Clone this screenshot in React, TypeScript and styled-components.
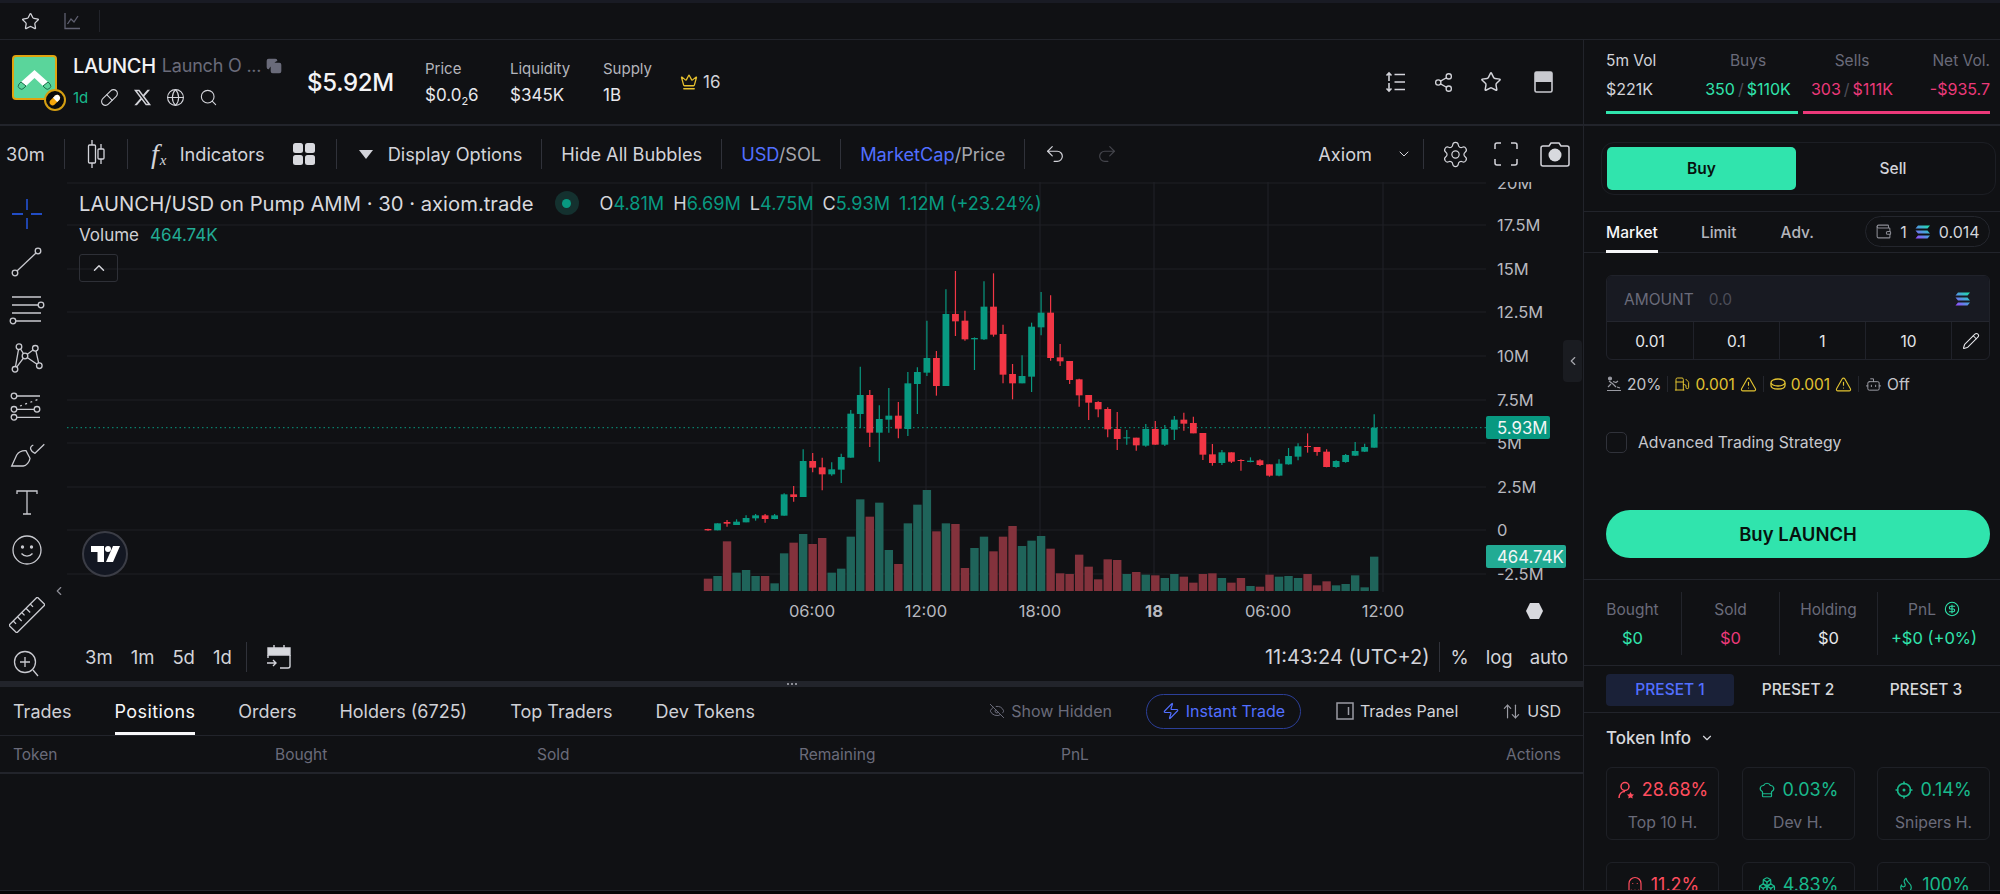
import React from 'react';
import styled, { createGlobalStyle } from 'styled-components';
import {
  Star,
  Pill,
  Search,
  Globe,
  Crown,
  Share2,
  ChevronDown,
  ChevronLeft,
  ChevronUp,
  Undo2,
  Redo2,
  Settings,
  EyeOff,
  Zap,
  ArrowUpDown,
  Wallet,
  Pencil,
  Fuel,
  Bot,
  TriangleAlert,
  CircleDollarSign,
  ChefHat,
  Ghost,
  Boxes,
  Flame,
  Copy,
} from 'lucide-react';
import { FaXTwitter } from 'react-icons/fa6';

const GlobalStyle = createGlobalStyle`
  html, body {
    margin: 0;
    padding: 0;
    background: #101114;
    overflow: hidden;
  }
  * {
    box-sizing: border-box;
  }
`;

const C = {
  bg: '#101114',
  line: '#22242b',
  text: '#d3d4da',
  muted: '#6a6b7a',
  green: '#30e4ad',
  pink: '#ec397a',
  tvGreen: '#089981',
  tvRed: '#f23645',
  blue: '#526fff',
};

const Page = styled.div`
  width: 2000px;
  height: 894px;
  display: flex;
  flex-direction: column;
  background: ${C.bg};
  color: ${C.text};
  font-family: Inter, 'Liberation Sans', sans-serif;
  overflow: hidden;
  border-top: 3px solid #191b24;
`;

const TopBar = styled.div`
  height: 37px;
  flex: none;
  display: flex;
  align-items: center;
  padding-left: 21px;
  border-bottom: 1px solid ${C.line};
`;

const TopIcon = styled.span`
  display: flex;
  color: ${(p: { $color?: string }) => p.$color || C.text};
  margin-right: 24px;
`;

const TopSep = styled.div`
  width: 1px;
  height: 22px;
  background: ${C.line};
  margin-left: -5px;
`;

const Body = styled.div`
  flex: 1;
  min-height: 0;
  display: flex;
`;

const Main = styled.div`
  width: 1584px;
  flex: none;
  display: flex;
  flex-direction: column;
  border-right: 1px solid ${C.line};
`;

/* token header */
const TokenHeader = styled.div`
  height: 86px;
  flex: none;
  display: flex;
  align-items: center;
  padding: 0 29px 0 12px;
  border-bottom: 2px solid ${C.line};
`;

const LogoWrap = styled.div`
  position: relative;
  width: 45px;
  height: 45px;
  flex: none;
  margin-bottom: 9px;
`;

const LogoBadge = styled.div`
  position: absolute;
  right: -9px;
  bottom: -11px;
  width: 22px;
  height: 22px;
  border-radius: 50%;
  background: #0b0b0d;
  border: 2px solid #d59f12;
  display: flex;
  align-items: center;
  justify-content: center;
`;

const TokenNames = styled.div`
  margin-left: 16px;
  width: 234px;
  display: flex;
  flex-direction: column;
  gap: 9px;
  margin-bottom: 2px;
`;

const NameRow = styled.div`
  display: flex;
  align-items: center;
  height: 24px;
`;

const Ticker = styled.span`
  font-size: 20px;
  font-weight: 500;
  color: #f2f2f4;
  letter-spacing: -0.3px;
`;

const FullName = styled.span`
  margin-left: 6px;
  font-size: 18px;
  color: ${C.muted};
  letter-spacing: -0.2px;
`;

const LinkRow = styled.div`
  display: flex;
  align-items: center;
  gap: 14px;
  height: 22px;
  color: ${C.text};
`;

const AgeText = styled.span`
  color: #19b98c;
  font-size: 15px;
  margin-right: -2px;
`;

const MarketCap = styled.div`
  width: 118px;
  font-size: 24px;
  font-weight: 500;
  color: #f4f4f6;
  letter-spacing: -0.3px;
`;

const HeadStat = styled.div`
  width: ${(p: { $w: number }) => p.$w}px;
  display: flex;
  flex-direction: column;
  gap: 7px;
`;

const HeadLabel = styled.span`
  font-size: 15px;
  color: #b4b5bc;
`;

const HeadValue = styled.span`
  font-size: 17px;
  color: #e8e8ec;
  sub {
    font-size: 11px;
    line-height: 0;
  }
`;

const CrownCount = styled.div`
  display: flex;
  align-items: center;
  gap: 5px;
  font-size: 17px;
  color: ${C.text};
`;

const HeadActions = styled.div`
  margin-left: auto;
  display: flex;
  align-items: center;
  gap: 26px;
  color: ${C.text};
`;

/* chart toolbar */
const ChartToolbar = styled.div`
  height: 56px;
  flex: none;
  display: flex;
  align-items: center;
  gap: 19px;
  padding: 0 13px 0 6px;
  font-size: 18.2px;
  color: ${C.text};
  white-space: nowrap;
`;

const ToolSep = styled.div`
  width: 1px;
  height: 30px;
  flex: none;
  background: #30323a;
  margin-left: ${(p: { $ml?: number }) => p.$ml || 0}px;
`;

const ToolItem = styled.div<{ $gap?: number; $ml?: number; $auto?: boolean }>`
  display: flex;
  align-items: center;
  flex: none;
  gap: ${(p) => p.$gap || 0}px;
  margin-left: ${(p) => (p.$auto ? 'auto' : `${p.$ml || 0}px`)};
`;

const FxGlyph = styled.span`
  display: flex;
  width: 24px;
  justify-content: center;
  font-family: 'Liberation Serif', serif;
  font-style: italic;
  font-size: 28px;
  line-height: 28px;
  i {
    font-size: 15px;
    line-height: 15px;
    align-self: flex-end;
    margin-left: 1px;
  }
`;

const Down = styled.span`
  width: 0;
  height: 0;
  border-left: 7.5px solid transparent;
  border-right: 7.5px solid transparent;
  border-top: 9px solid #d3d4da;
`;

const Accent = styled.span`
  color: ${C.blue};
`;

const Dim = styled.span`
  color: #a6a7ae;
`;

/* chart area */
const ChartArea = styled.div`
  height: 499px;
  flex: none;
  display: flex;
`;

const ToolColumn = styled.div`
  position: relative;
  width: 67px;
  flex: none;
  display: flex;
  flex-direction: column;
  padding: 14px 0 0 9px;
  gap: 12px;
`;

const ToolSvg = styled.svg`
  display: block;
  width: 36px;
  height: 36px;
  flex: none;
  fill: none;
  stroke: #c9cad0;
  stroke-width: 1.3;
  circle.node {
    fill: ${C.bg};
  }
`;

const ColumnRule = styled.div`
  width: 48px;
  height: 1px;
  margin: 3px 0 2px -6px;
  background: #3a3c44;
`;

const ColumnCollapse = styled.span`
  position: absolute;
  left: 52px;
  top: 402px;
  display: flex;
  color: #8b8c94;
`;

const ChartBody = styled.div`
  position: relative;
  flex: 1;
  min-width: 0;
  display: flex;
  flex-direction: column;
`;

const ChartSvg = styled.svg`
  display: block;
  width: 1516px;
  height: 443px;
  flex: none;
`;

const AxisText = styled.text`
  font-family: Inter, 'Liberation Sans', sans-serif;
  font-size: 16.5px;
  fill: #b7b8bf;
`;

const TagText = styled.text`
  font-family: Inter, 'Liberation Sans', sans-serif;
  font-size: 16.8px;
  fill: #f4f6f6;
`;

const Legend = styled.div`
  position: absolute;
  left: 12px;
  top: 9px;
  display: flex;
  align-items: center;
  height: 24px;
  font-size: 20.25px;
  color: #d8d9de;
  white-space: nowrap;
`;

const LegendDot = styled.span`
  width: 24px;
  height: 24px;
  margin: 0 21px 0 21px;
  border-radius: 50%;
  background: #14312f;
  display: flex;
  align-items: center;
  justify-content: center;
  &::after {
    content: '';
    width: 9px;
    height: 9px;
    border-radius: 50%;
    background: ${C.tvGreen};
  }
`;

const Ohlc = styled.span`
  display: flex;
  gap: 9px;
  font-size: 18.1px;
  b {
    font-weight: 400;
    color: ${C.text};
  }
  em {
    font-style: normal;
    color: ${C.tvGreen};
  }
`;

const VolumeLine = styled.div`
  position: absolute;
  left: 12px;
  top: 43px;
  display: flex;
  gap: 11px;
  font-size: 17px;
  color: #cfd0d5;
  em {
    font-style: normal;
    color: #22ab94;
  }
`;

const CollapseLegend = styled.div`
  position: absolute;
  left: 12px;
  top: 72px;
  width: 39px;
  height: 28px;
  border: 1px solid #2e3037;
  border-radius: 3px;
  display: flex;
  align-items: center;
  justify-content: center;
  color: #d3d4da;
`;

const TvBadge = styled.div`
  position: absolute;
  left: 15px;
  top: 349px;
  width: 46px;
  height: 46px;
  border-radius: 50%;
  background: #131722;
  border: 2px solid #3b3d46;
  display: flex;
  align-items: center;
  justify-content: center;
`;

const SideHandle = styled.div`
  position: absolute;
  right: 1px;
  top: 158px;
  width: 19px;
  height: 42px;
  border-radius: 4px;
  background: #1a1c21;
  display: flex;
  align-items: center;
  justify-content: center;
  color: #a6a7ae;
`;

const RangeBar = styled.div`
  flex: 1;
  display: flex;
  align-items: center;
  padding: 8px 15px 0 18px;
  font-size: 18.5px;
  color: ${C.text};
`;

const RangeBtn = styled.span`
  margin-right: ${(p: { $mr: number }) => p.$mr}px;
`;

const RangeSep = styled.div`
  width: 1px;
  height: 30px;
  background: #30323a;
  margin: ${(p: { $tight?: boolean }) => (p.$tight ? '0 -6px' : '0')};
`;

const RangeRight = styled.div`
  margin-left: auto;
  display: flex;
  align-items: center;
  gap: 17px;
`;

const ClockText = styled.span`
  font-size: 20px;
  margin-right: -2px;
`;

const Grip = styled.div`
  height: 6px;
  flex: none;
  background: #22242b;
  display: flex;
  align-items: center;
  justify-content: center;
  gap: 2px;
  span {
    width: 2px;
    height: 2px;
    background: #8b8c94;
  }
`;

/* bottom panel */
const TabsBar = styled.div`
  height: 49px;
  flex: none;
  display: flex;
  align-items: stretch;
  padding: 0 22px 0 13px;
  border-bottom: 1px solid ${C.line};
`;

const BottomTab = styled.div<{ $active?: boolean }>`
  display: flex;
  align-items: center;
  margin-right: 43px;
  font-size: 18px;
  letter-spacing: ${(p) => (p.$active ? '0.4px' : '0')};
  color: ${(p) => (p.$active ? '#f7f7f9' : '#cfd0d6')};
  border-bottom: 3px solid ${(p) => (p.$active ? '#f7f7f9' : 'transparent')};
  border-top: 3px solid transparent;
`;

const TabActions = styled.div`
  margin-left: auto;
  display: flex;
  align-items: center;
  font-size: 16px;
`;

const TabAction = styled.div<{ $color?: string; $mr?: number }>`
  display: flex;
  align-items: center;
  gap: 6px;
  color: ${(p) => p.$color || C.text};
  margin-right: ${(p) => p.$mr || 0}px;
`;

const InstantPill = styled.div`
  display: flex;
  align-items: center;
  justify-content: center;
  gap: 6px;
  width: 155px;
  height: 35px;
  margin-right: 35px;
  border: 1px solid #2c3f98;
  border-radius: 18px;
  color: ${C.blue};
`;

const TableHead = styled.div`
  height: 38px;
  flex: none;
  display: grid;
  grid-template-columns: repeat(4, 262px) 1fr 170px;
  align-items: center;
  padding: 0 22px 0 13px;
  font-size: 15.5px;
  color: ${C.muted};
  border-bottom: 2px solid ${C.line};
`;

const HeadCell = styled.span<{ $right?: boolean }>`
  text-align: ${(p) => (p.$right ? 'right' : 'left')};
`;

const Footer = styled.div`
  height: 4px;
  flex: none;
  background: #050506;
  border-top: 1px solid ${C.line};
`;

/* right panel */
const Side = styled.div`
  flex: 1;
  min-width: 0;
  display: flex;
  flex-direction: column;
  overflow: hidden;
`;

const Volumes = styled.div`
  height: 86px;
  flex: none;
  padding: 11px 10px 0 22px;
  border-bottom: 2px solid ${C.line};
`;

const VolumeGrid = styled.div`
  display: grid;
  grid-template-columns: 97px 90px 118px 1fr;
  row-gap: 9px;
  font-size: 16px;
  white-space: nowrap;
`;

const VolCell = styled.span<{ $align?: string; $color?: string }>`
  text-align: ${(p) => p.$align || 'center'};
  color: ${(p) => p.$color || C.text};
  i {
    font-style: normal;
    color: #4d4e59;
    margin: 0 3px;
  }
`;

const VolLabel = styled(VolCell)`
  font-size: 15.5px;
  color: ${(p) => p.$color || C.muted};
`;

const VolBars = styled.div`
  display: flex;
  gap: 5px;
  margin-top: 12px;
`;

const VolBar = styled.div<{ $color: string }>`
  height: 3px;
  background: ${(p) => p.$color};
`;

const SwitchWrap = styled.div`
  height: 86px;
  flex: none;
  padding: 16px 4px 16px 17px;
  border-bottom: 1px solid ${C.line};
`;

const Switch = styled.div`
  height: 53px;
  border: 1px solid #1c1e24;
  border-radius: 13px;
  padding: 4px 5px;
  display: flex;
`;

const SwitchBtn = styled.div<{ $on?: boolean }>`
  width: 189px;
  flex: ${(p) => (p.$on ? 'none' : 1)};
  display: flex;
  align-items: center;
  justify-content: center;
  border-radius: 5px;
  font-size: 15.5px;
  font-weight: ${(p) => (p.$on ? 600 : 500)};
  background: ${(p) => (p.$on ? C.green : 'transparent')};
  color: ${(p) => (p.$on ? '#07120e' : C.text)};
`;

const OrderTabs = styled.div`
  height: 41px;
  flex: none;
  display: flex;
  align-items: stretch;
  padding: 0 10px 0 22px;
  border-bottom: 1px solid ${C.line};
  font-size: 15.5px;
`;

const OrderTab = styled.div<{ $active?: boolean; $mr: number }>`
  display: flex;
  align-items: center;
  margin-right: ${(p) => p.$mr}px;
  font-weight: 500;
  color: ${(p) => (p.$active ? '#f7f7f9' : '#b4b5bc')};
  border-bottom: 3px solid ${(p) => (p.$active ? '#f7f7f9' : 'transparent')};
  border-top: 3px solid transparent;
  margin-bottom: -1px;
`;

const WalletPill = styled.div`
  margin: 4px 0 5px auto;
  width: 125px;
  display: flex;
  align-items: center;
  justify-content: center;
  gap: 8px;
  border: 1px solid #24262d;
  border-radius: 16px;
  font-size: 16px;
  color: ${C.text};
  svg {
    flex: none;
  }
`;

const OrderForm = styled.div`
  height: 327px;
  flex: none;
  padding: 22px 10px 0 22px;
  border-bottom: 1px solid ${C.line};
`;

const AmountBox = styled.div`
  height: 85px;
  border: 1px solid #20222a;
  border-radius: 6px;
  overflow: hidden;
`;

const AmountInput = styled.div`
  height: 46px;
  display: flex;
  align-items: center;
  padding: 1px 18px 0 17px;
  background: #181a22;
  border-bottom: 1px solid #24262e;
  font-size: 15.5px;
  color: ${C.muted};
`;

const AmountZero = styled.span`
  margin-left: 15px;
  color: #4c4d58;
`;

const SolWrap = styled.span`
  margin-left: auto;
  display: flex;
`;

const QuickRow = styled.div`
  height: 38px;
  display: grid;
  grid-template-columns: repeat(4, 86px) 1fr;
`;

const QuickCell = styled.div`
  display: flex;
  align-items: center;
  justify-content: center;
  font-size: 15.5px;
  color: #e6e7ea;
  border-left: 1px solid #20222a;
  &:first-child {
    border-left: 0;
  }
`;

const InfoRow = styled.div`
  margin-top: 14px;
  height: 20px;
  display: flex;
  align-items: center;
  gap: 6px;
  font-size: 15.5px;
  color: #c4c5cb;
`;

const InfoItem = styled.span<{ $warn?: boolean }>`
  display: flex;
  align-items: center;
  gap: 5px;
  color: ${(p) => (p.$warn ? '#e2c331' : '#c4c5cb')};
`;

const InfoSep = styled.span`
  width: 1px;
  height: 16px;
  background: #24262d;
`;

const CheckRow = styled.div`
  margin-top: 38px;
  display: flex;
  align-items: center;
  gap: 11px;
  height: 20px;
  font-size: 15.75px;
  color: #c7c8ce;
`;

const CheckBox = styled.div`
  width: 21px;
  height: 21px;
  border: 1px solid #30323a;
  border-radius: 5px;
`;

const BuyButton = styled.div`
  margin-top: 58px;
  height: 48px;
  border-radius: 24px;
  background: ${C.green};
  color: #07120e;
  display: flex;
  align-items: center;
  justify-content: center;
  font-size: 18.5px;
  font-weight: 600;
`;

const Position = styled.div`
  height: 86px;
  flex: none;
  display: grid;
  grid-template-columns: 98px 98px 98px 1fr;
  padding: 12px 10px 10px 0;
  border-bottom: 1px solid ${C.line};
`;

const PosCell = styled.div<{ $inset?: number }>`
  display: flex;
  flex-direction: column;
  align-items: center;
  justify-content: center;
  gap: 9px;
  padding: 0 ${(p) => p.$inset || 0}px;
  border-right: 1px solid #22242b;
  font-size: 15.5px;
  &:last-child {
    border-right: 0;
  }
`;

const PosLabel = styled.span`
  display: flex;
  align-items: center;
  gap: 8px;
  color: ${C.muted};
`;

const PosValue = styled.span<{ $color?: string }>`
  font-size: 16.5px;
  color: ${(p) => p.$color || '#e6e7ea'};
`;

const Presets = styled.div`
  height: 47px;
  flex: none;
  display: grid;
  grid-template-columns: repeat(3, 128px);
  align-items: center;
  padding: 1px 0 0 22px;
  border-bottom: 1px solid ${C.line};
`;

const Preset = styled.div<{ $on?: boolean }>`
  height: 32px;
  display: flex;
  align-items: center;
  justify-content: center;
  border-radius: 4px;
  font-size: 15.5px;
  font-weight: 500;
  background: ${(p) => (p.$on ? '#1a2138' : 'transparent')};
  color: ${(p) => (p.$on ? C.blue : '#d7d8dc')};
`;

const TokenInfo = styled.div`
  flex: 1;
  min-height: 0;
  overflow: hidden;
  padding: 14px 10px 0 22px;
`;

const InfoTitle = styled.div`
  display: flex;
  align-items: center;
  gap: 9px;
  height: 22px;
  font-size: 17px;
  font-weight: 500;
  color: #d7d8dc;
`;

const Cards = styled.div`
  margin-top: 18px;
  display: grid;
  grid-template-columns: repeat(3, 113px);
  justify-content: space-between;
  row-gap: 22px;
`;

const Card = styled.div`
  height: 73px;
  padding-top: 11px;
  border: 1px solid #1e2026;
  border-radius: 6px;
  display: flex;
  flex-direction: column;
  align-items: center;
  gap: 12px;
`;

const CardValue = styled.span<{ $color: string }>`
  display: flex;
  align-items: center;
  gap: 7px;
  font-size: 18px;
  line-height: 22px;
  color: ${(p) => p.$color};
`;

const CardLabel = styled.span`
  font-size: 15.75px;
  color: ${C.muted};
`;

/* chart data, pixels read off the picture: wick top, body top, body bottom, wick bottom */
type Candle = [number, number, number, number, 0 | 1];

const early: Candle[] = [
  [836, 837, 841, 842, 0], [820, 820, 841, 841, 1], [810, 816, 821, 830, 0], [808, 815, 825, 825, 1],
  [796, 804, 817, 817, 1], [792, 796, 805, 812, 1], [792, 796, 807, 818, 0], [792, 796, 807, 808, 1],
  [730, 733, 797, 797, 1], [708, 733, 741, 755, 0], [598, 633, 741, 741, 1], [609, 633, 653, 667, 0],
  [623, 652, 673, 721, 0], [637, 658, 673, 677, 1], [611, 621, 659, 699, 1], [480, 491, 623, 623, 1],
  [350, 435, 492, 535, 1], [420, 435, 548, 591, 0], [466, 507, 548, 635, 1], [414, 497, 509, 548, 1],
  [456, 497, 536, 565, 0], [366, 400, 537, 558, 1], [352, 366, 402, 492, 1], [212, 324, 368, 378, 1],
  [303, 324, 408, 437, 0], [118, 192, 408, 408, 1], [63, 192, 214, 258, 0], [182, 212, 268, 272, 0],
  [262, 264, 268, 360, 1], [94, 170, 268, 270, 1], [70, 170, 254, 260, 0], [224, 252, 374, 400, 0],
  [342, 372, 400, 448, 0], [316, 378, 400, 400, 1], [218, 230, 380, 426, 1], [126, 188, 232, 256, 1],
  [136, 188, 324, 332, 0], [282, 322, 334, 348, 0], [333, 333, 390, 402, 0], [386, 388, 436, 470, 0],
  [435, 435, 458, 510, 0], [454, 456, 478, 502, 0], [472, 477, 538, 562, 0], [486, 537, 567, 600, 0],
  [540, 562, 565, 584, 1], [563, 563, 586, 602, 0],
];

const late: Candle[] = [
  [132, 147, 197, 200, 1], [123, 147, 194, 194, 0], [135, 147, 194, 198, 1], [108, 119, 149, 180, 1],
  [98, 119, 131, 152, 0], [110, 129, 160, 160, 0], [159, 159, 224, 240, 0], [192, 223, 249, 257, 0],
  [210, 217, 249, 255, 1], [217, 217, 245, 249, 0], [238, 240, 242, 272, 0], [232, 242, 246, 247, 1],
  [238, 241, 255, 258, 0], [253, 253, 287, 290, 0], [238, 251, 287, 289, 1], [204, 228, 253, 254, 1],
  [190, 199, 230, 241, 1], [160, 198, 201, 218, 0], [201, 201, 216, 227, 0], [208, 215, 261, 262, 0],
  [241, 243, 261, 263, 1], [222, 225, 246, 248, 1], [186, 213, 227, 228, 1], [191, 201, 215, 216, 1],
  [103, 143, 203, 203, 1],
];

const volumes = [
  986, 978, 874, 968, 960, 978, 978, 1000, 910, 878, 852, 882, 864, 968, 956, 860, 748, 800, 758, 900,
  942, 820, 764, 720, 844, 820, 822, 954, 894, 860, 904, 860, 828, 888, 872, 858, 896, 970, 972, 914,
  950, 988, 928, 930, 972, 966, 974, 976, 984, 972, 980, 998, 972, 970, 984, 998, 984, 1008, 1010, 974,
  980, 978, 984, 972, 1006, 994, 1006, 1002, 976, 1012, 920,
];

const candles: Candle[] = [
  ...early,
  ...late.map(([a, b, c, d, up]): Candle => [a + 390, b + 390, c + 390, d + 390, up]),
];

const toY = (z: number) => 250 + z / 3;
const toX = (i: number) => 708 + i * 9.517;

const priceLines: [string, number][] = [
  ['20M', 183], ['17.5M', 225], ['15M', 269], ['12.5M', 312], ['10M', 356],
  ['7.5M', 400], ['5M', 443], ['2.5M', 487], ['0', 530], ['-2.5M', 574],
];
const timeLines: [string, number, boolean][] = [
  ['06:00', 812, false], ['12:00', 926, false], ['18:00', 1040, false],
  ['18', 1154, true], ['06:00', 1268, false], ['12:00', 1383, false],
];

const Chart = () => (
  <ChartSvg viewBox="67 182 1516 443">
    {priceLines.map(([, y]) => (
      <line key={y} x1={67} x2={1486} y1={y} y2={y} stroke="#1f2025" strokeWidth={1.2} />
    ))}
    {timeLines.map(([, x]) => (
      <line key={x} x1={x} x2={x} y1={182} y2={592} stroke="#1f2025" strokeWidth={1.2} />
    ))}
    {volumes.map((top, i) => (
      <rect
        key={i}
        x={toX(i) - 4.2}
        y={toY(top)}
        width={8.4}
        height={591 - toY(top)}
        fill={candles[i][4] ? '#1f645a' : '#83323c'}
      />
    ))}
    <line x1={67} x2={1486} y1={427.7} y2={427.7} stroke="#089981" strokeWidth={1} strokeDasharray="1.5 3" />
    {candles.map(([wt, bt, bb, wb, up], i) => {
      const color = up ? C.tvGreen : C.tvRed;
      return (
        <g key={i}>
          <line x1={toX(i)} x2={toX(i)} y1={toY(wt)} y2={toY(wb)} stroke={color} strokeWidth={1.2} />
          <rect x={toX(i) - 3.4} y={toY(bt)} width={6.8} height={Math.max((bb - bt) / 3, 1)} fill={color} />
        </g>
      );
    })}
    {priceLines.map(([label, y]) => (
      <AxisText key={label} x={1497} y={y + 5.5}>
        {label}
      </AxisText>
    ))}
    {timeLines.map(([label, x, bold]) => (
      <AxisText key={x} x={x} y={617} textAnchor="middle" fontWeight={bold ? 700 : 400}>
        {label}
      </AxisText>
    ))}
    <path d="M1526 611l4-8h9l4 8-4 8h-9z" fill="#d8d9de" />
    <rect x={1486} y={416} width={64} height={23} rx={2} fill={C.tvGreen} />
    <TagText x={1497} y={433.5}>5.93M</TagText>
    <rect x={1486} y={545} width={80} height={23} rx={2} fill="#22ab94" />
    <TagText x={1497} y={562.5}>464.74K</TagText>
  </ChartSvg>
);

const SolanaMark = ({ size = 16 }: { size?: number }) => (
  <svg width={size} height={size} viewBox="0 0 16 16">
    <defs>
      <linearGradient id="sol" x1="0" y1="1" x2="1" y2="0">
        <stop offset="0" stopColor="#9945ff" />
        <stop offset="0.5" stopColor="#4f9ae0" />
        <stop offset="1" stopColor="#19e5a5" />
      </linearGradient>
    </defs>
    <path d="M3 1.5h12l-2.5 3H.5zM.5 6.5h12l2.5 3H3zM3 11.5h12l-2.5 3H.5z" fill="url(#sol)" />
  </svg>
);

const Warn = () => <TriangleAlert size={17} strokeWidth={1.6} />;

const SlipIcon = () => (
  <svg width={16} height={16} viewBox="0 0 16 16" fill="none" stroke="#9a9ba3" strokeWidth={1.2}>
    <circle cx={4} cy={2.5} r={1.5} fill="#9a9ba3" />
    <path d="M3 5l4 3 3 3M7 5.500l3 1 2-1.500M5 8l-3 3M1 14.500h14M11 11l3 1" />
  </svg>
);

const CoinIcon = () => (
  <svg width={16} height={16} viewBox="0 0 16 16" fill="none" stroke="#e2c331" strokeWidth={1.3}>
    <ellipse cx={8} cy={6.5} rx={7} ry={3.5} />
    <path d="M1 7v2.500C1 11.500 4 13 8 13s7-1.500 7-3.500V7" />
  </svg>
);

const UserStarIcon = () => (
  <svg width={18} height={18} viewBox="0 0 18 18" fill="none" stroke="#ff4d5e" strokeWidth={1.5}>
    <circle cx={8} cy={5.5} r={4} />
    <path d="M2 17c0-4 2.500-6.500 6-6.500" />
    <path d="M13.500 11l1.200 2.300 2.300.3-1.700 1.600.4 2.300-2.200-1.100-2.200 1.100.4-2.300-1.700-1.600 2.300-.3z" fill="#ff4d5e" stroke="none" />
  </svg>
);

const SniperIcon = () => (
  <svg width={18} height={18} viewBox="0 0 18 18" fill="none" stroke="currentColor" strokeWidth={1.6}>
    <circle cx={9} cy={9} r={6.5} />
    <circle cx={9} cy={9} r={1.5} fill="currentColor" stroke="none" />
    <path d="M9 0.500v3M9 14.500v3M0.500 9h3M14.500 9h3" />
  </svg>
);

const tokenCards: { value: string; label?: string; color: string; icon: React.ReactNode }[] = [
  { value: '28.68%', label: 'Top 10 H.', color: '#ff4d5e', icon: <UserStarIcon /> },
  { value: '0.03%', label: 'Dev H.', color: '#19b98c', icon: <ChefHat size={18} strokeWidth={1.6} /> },
  { value: '0.14%', label: 'Snipers H.', color: '#19b98c', icon: <SniperIcon /> },
  { value: '11.2%', color: '#ff4d5e', icon: <Ghost size={18} strokeWidth={1.6} /> },
  { value: '4.83%', color: '#19b98c', icon: <Boxes size={18} strokeWidth={1.6} /> },
  { value: '100%', color: '#19b98c', icon: <Flame size={18} strokeWidth={1.6} /> },
];

const App = () => (
  <Page>
    <GlobalStyle />
    <TopBar>
      <TopIcon>
        <Star size={19} strokeWidth={1.6} />
      </TopIcon>
      <TopIcon $color="#5f6070">
        <svg width={16} height={18} viewBox="0 0 16 18" fill="none" stroke="currentColor" strokeWidth={1.3}>
          <path d="M1 1v15.500h15M3.500 12l3.500-5 3 3 4-6" />
        </svg>
      </TopIcon>
      <TopSep />
    </TopBar>
    <Body>
      <Main>
        <TokenHeader>
          <LogoWrap>
            <svg width={45} height={45} viewBox="0 0 45 45">
              <rect x={1} y={1} width={43} height={43} rx={3} fill="#5ad59b" stroke="#e0a40f" strokeWidth={2} />
              <path d="M9 27l13.500-12 13.500 12-5 4-8.500-8-8.500 8z" fill="#fff" />
              <path d="M9 27l5 4-2 2a3.200 3.200 0 0 1-5-4zM36 27l-5 4 2 2a3.200 3.200 0 0 0 5-4z" fill="#5ad59b" stroke="#1f6f4c" strokeWidth={1} />
            </svg>
            <LogoBadge>
              <svg width={14} height={14} viewBox="0 0 14 14">
                <path d="M2.500 11.500a3 3 0 0 1 0-4.200l4.800-4.800a3 3 0 0 1 4.200 4.200l-4.800 4.800a3 3 0 0 1-4.200 0z" fill="#f7a70a" />
                <path d="M7.300 2.500a3 3 0 0 1 4.200 4.200L9.200 9 5 4.800z" fill="#fff" />
              </svg>
            </LogoBadge>
          </LogoWrap>
          <TokenNames>
            <NameRow>
              <Ticker>LAUNCH</Ticker>
              <FullName>Launch O ...</FullName>
              <Copy size={16} color="#6a6b7a" fill="#6a6b7a" style={{ marginLeft: 5 }} />
            </NameRow>
            <LinkRow>
              <AgeText>1d</AgeText>
              <Pill size={19} strokeWidth={1.4} />
              <FaXTwitter size={19} />
              <Globe size={19} strokeWidth={1.4} />
              <Search size={19} strokeWidth={1.4} />
            </LinkRow>
          </TokenNames>
          <MarketCap>$5.92M</MarketCap>
          <HeadStat $w={85}>
            <HeadLabel>Price</HeadLabel>
            <HeadValue>
              $0.0<sub>2</sub>6
            </HeadValue>
          </HeadStat>
          <HeadStat $w={93}>
            <HeadLabel>Liquidity</HeadLabel>
            <HeadValue>$345K</HeadValue>
          </HeadStat>
          <HeadStat $w={77}>
            <HeadLabel>Supply</HeadLabel>
            <HeadValue>1B</HeadValue>
          </HeadStat>
          <CrownCount>
            <Crown size={18} color="#e6c02e" strokeWidth={1.7} />
            16
          </CrownCount>
          <HeadActions>
            <svg width={22} height={22} viewBox="0 0 22 22" fill="none" stroke="currentColor" strokeWidth={1.6}>
              <path d="M4 2v8M1.500 4.500L4 2l2.500 2.500M4 20v-8M1.500 17.500L4 20l2.500-2.500M9.500 3.500H20M9.500 11H20M9.500 18.500H20" />
            </svg>
            <Share2 size={21} strokeWidth={1.5} />
            <Star size={22} strokeWidth={1.6} />
            <svg width={20} height={22} viewBox="0 0 20 22" style={{ marginLeft: 6 }}>
              <rect x={1} y={1} width={17} height={20} rx={1.5} fill="none" stroke="#c9cad0" strokeWidth={1.6} />
              <rect x={1} y={1} width={17} height={10} fill="#c9cad0" />
            </svg>
          </HeadActions>
        </TokenHeader>

        <ChartToolbar>
          <span>30m</span>
          <ToolSep />
          <svg width={24} height={30} viewBox="0 0 24 30" fill="none" stroke="#d3d4da" strokeWidth={1.3} style={{ flex: 'none' }}>
            <path d="M8 1v5M8 24v5M17 5v5M17 20v5" />
            <rect x={4.5} y={6} width={7} height={18} rx={1} />
            <rect x={14} y={10} width={6} height={10} rx={1} />
          </svg>
          <ToolSep />
          <ToolItem $gap={9}>
            <FxGlyph>
              f<i>x</i>
            </FxGlyph>
            Indicators
          </ToolItem>
          <ToolItem $ml={9}>
            <svg width={22} height={22} viewBox="0 0 22 22" fill="#d8d9de">
              <rect x={0} y={0} width={10} height={10} rx={2.5} />
              <rect x={12} y={0} width={10} height={10} rx={2.5} />
              <rect x={0} y={12} width={10} height={10} rx={2.5} />
              <rect x={12} y={12} width={10} height={10} rx={2.5} />
            </svg>
          </ToolItem>
          <ToolSep $ml={2} />
          <ToolItem $ml={3} $gap={15}>
            <Down />
            Display Options
          </ToolItem>
          <ToolSep />
          <span>Hide All Bubbles</span>
          <ToolSep />
          <span>
            <Accent>USD</Accent>
            <Dim>/SOL</Dim>
          </span>
          <ToolSep />
          <span>
            <Accent>MarketCap</Accent>
            <Dim>/Price</Dim>
          </span>
          <ToolSep />
          <Undo2 size={22} strokeWidth={1.3} style={{ flex: 'none' }} />
          <Redo2 size={22} strokeWidth={1.3} color="#44454c" style={{ flex: 'none', marginLeft: 11 }} />
          <ToolItem $auto $gap={24}>
            Axiom
            <ChevronDown size={16} strokeWidth={1.5} />
          </ToolItem>
          <ToolSep $ml={-8} />
          <Settings size={29} strokeWidth={1} style={{ flex: 'none', marginLeft: -2 }} />
          <svg width={26} height={26} viewBox="0 0 26 26" fill="none" stroke="#d3d4da" strokeWidth={1.5} style={{ flex: 'none', marginLeft: 4 }}>
            <path d="M8 2H4a2 2 0 0 0-2 2v4M18 2h4a2 2 0 0 1 2 2v4M8 24H4a2 2 0 0 1-2-2v-4M18 24h4a2 2 0 0 0 2-2v-4" />
          </svg>
          <svg width={30} height={26} viewBox="0 0 30 26" style={{ flex: 'none', marginLeft: 2 }}>
            <path d="M3 5h6l2-3h8l2 3h6a2 2 0 0 1 2 2v16a2 2 0 0 1-2 2H3a2 2 0 0 1-2-2V7a2 2 0 0 1 2-2z" fill="none" stroke="#d3d4da" strokeWidth={1.5} />
            <circle cx={15} cy={14} r={6.5} fill="#d8d9de" />
          </svg>
        </ChartToolbar>

        <ChartArea>
          <ToolColumn>
            <ToolSvg viewBox="0 0 36 36" style={{ stroke: '#2962ff' }}>
              <path d="M3 18h11M22 18h11M18 3v11M18 22v11" />
            </ToolSvg>
            <ToolSvg viewBox="0 0 36 36">
              <path d="M8 27L27 9" />
              <circle className="node" cx={6} cy={29} r={2.8} />
              <circle className="node" cx={29} cy={7} r={2.8} />
            </ToolSvg>
            <ToolSvg viewBox="0 0 36 36">
              <path d="M3 5h29M3 13h26M3 21h29M7 29h25" />
              <circle className="node" cx={32} cy={13} r={2.8} />
              <circle className="node" cx={4} cy={29} r={2.8} />
            </ToolSvg>
            <ToolSvg viewBox="0 0 36 36">
              <path d="M6 29.300L10 6.700l6 9.300L6 29.300zM16 16L26.300 8.300l4 17.400L16 16z" />
              <circle className="node" cx={10} cy={6.7} r={2.8} />
              <circle className="node" cx={26.3} cy={8.3} r={2.8} />
              <circle className="node" cx={16} cy={16} r={2.8} />
              <circle className="node" cx={30.3} cy={25.7} r={2.8} />
              <circle className="node" cx={6} cy={29.3} r={2.8} />
            </ToolSvg>
            <ToolSvg viewBox="0 0 36 36">
              <path d="M8 8h23M8 21.300h17M8 29.300h23" />
              <path d="M11 18l18.500-6.700" strokeDasharray="2 3.5" />
              <circle className="node" cx={5} cy={8} r={2.8} />
              <circle className="node" cx={5} cy={21.3} r={2.8} />
              <circle className="node" cx={28} cy={21.3} r={2.8} />
              <circle className="node" cx={5} cy={29.3} r={2.8} />
            </ToolSvg>
            <ToolSvg viewBox="0 0 36 36">
              <path d="M2.700 30l5-11c2-3 6-4.500 9.300-4.300l4 7.600c-.5 3.500-3.500 7.700-6.700 7.700z" />
              <path d="M24.300 9c-2 1-3 3-2.600 4.300.6 2 3 3.500 4.300 4l9.300-9" />
            </ToolSvg>
            <ToolSvg viewBox="0 0 36 36">
              <path d="M8 10V7h20v3M18 7v23M14 30h8" />
            </ToolSvg>
            <ToolSvg viewBox="0 0 36 36">
              <circle cx={18} cy={18} r={14} />
              <circle cx={13.5} cy={15} r={1} fill="#c9cad0" />
              <circle cx={22.5} cy={15} r={1} fill="#c9cad0" />
              <path d="M12.500 21.500c3 3.500 8 3.500 11 0" />
            </ToolSvg>
            <ColumnRule />
            <ToolSvg viewBox="0 0 36 36">
              <g transform="rotate(-45 18 18)">
                <rect x={-2} y={12.5} width={40} height={11} rx={1} />
                <path d="M4 12.500v4M10 12.500v6M16 12.500v4M22 12.500v6M28 12.500v4" />
              </g>
            </ToolSvg>
            <ToolSvg viewBox="0 0 36 36">
              <circle cx={16} cy={17} r={10.5} />
              <path d="M16 12v10M11 17h10M24 25l5 6" />
            </ToolSvg>
            <ColumnCollapse>
              <ChevronLeft size={14} />
            </ColumnCollapse>
          </ToolColumn>
          <ChartBody>
            <Chart />
            <Legend>
              LAUNCH/USD on Pump AMM · 30 · axiom.trade
              <LegendDot />
              <Ohlc>
                <span>
                  <b>O</b>
                  <em>4.81M</em>
                </span>
                <span>
                  <b>H</b>
                  <em>6.69M</em>
                </span>
                <span>
                  <b>L</b>
                  <em>4.75M</em>
                </span>
                <span>
                  <b>C</b>
                  <em>5.93M</em>
                </span>
                <em>1.12M (+23.24%)</em>
              </Ohlc>
            </Legend>
            <VolumeLine>
              Volume
              <em>464.74K</em>
            </VolumeLine>
            <CollapseLegend>
              <ChevronUp size={18} />
            </CollapseLegend>
            <TvBadge>
              <svg width={29} height={16} viewBox="0 0 29 16" fill="#fff">
                <path d="M0 0h13v16H6.500V6H0z" />
                <circle cx={17} cy={3} r={3} />
                <path d="M22 0h7l-7 16h-7z" />
              </svg>
            </TvBadge>
            <SideHandle>
              <ChevronLeft size={14} />
            </SideHandle>
            <RangeBar>
              <RangeBtn $mr={18}>3m</RangeBtn>
              <RangeBtn $mr={18}>1m</RangeBtn>
              <RangeBtn $mr={18}>5d</RangeBtn>
              <RangeBtn $mr={14}>1d</RangeBtn>
              <RangeSep />
              <svg width={26} height={26} viewBox="0 0 26 26" fill="none" stroke="#d3d4da" strokeWidth={1.4} style={{ marginLeft: 19 }}>
                <path d="M8 1v3M18 1v3" />
                <path d="M2 4h22v7H2z" fill="#d8d9de" />
                <path d="M2 11v3M24 11v11a2 2 0 0 1-2 2h-8M1 19h9M7 16l3 3-3 3" />
              </svg>
              <RangeRight>
                <ClockText>11:43:24 (UTC+2)</ClockText>
                <RangeSep $tight />
                <span>%</span>
                <span>log</span>
                <span>auto</span>
              </RangeRight>
            </RangeBar>
          </ChartBody>
        </ChartArea>

        <Grip>
          <span />
          <span />
          <span />
        </Grip>

        <TabsBar>
          <BottomTab>Trades</BottomTab>
          <BottomTab $active>Positions</BottomTab>
          <BottomTab>Orders</BottomTab>
          <BottomTab>Holders (6725)</BottomTab>
          <BottomTab>Top Traders</BottomTab>
          <BottomTab>Dev Tokens</BottomTab>
          <TabActions>
            <TabAction $color="#6a6b7a" $mr={34}>
              <EyeOff size={16} strokeWidth={1.5} />
              Show Hidden
            </TabAction>
            <InstantPill>
              <Zap size={18} strokeWidth={1.6} />
              Instant Trade
            </InstantPill>
            <TabAction $mr={44}>
              <svg width={18} height={18} viewBox="0 0 18 18" fill="none" stroke="#9a9ba3" strokeWidth={1.5}>
                <rect x={1} y={1} width={16} height={16} />
                <path d="M12.500 5v8" />
              </svg>
              Trades Panel
            </TabAction>
            <TabAction>
              <ArrowUpDown size={19} strokeWidth={1.5} color="#9a9ba3" />
              USD
            </TabAction>
          </TabActions>
        </TabsBar>
        <TableHead>
          <HeadCell>Token</HeadCell>
          <HeadCell>Bought</HeadCell>
          <HeadCell>Sold</HeadCell>
          <HeadCell>Remaining</HeadCell>
          <HeadCell>PnL</HeadCell>
          <HeadCell $right>Actions</HeadCell>
        </TableHead>
      </Main>

      <Side>
        <Volumes>
          <VolumeGrid>
            <VolLabel $align="left" $color="#d3d4da">5m Vol</VolLabel>
            <VolLabel>Buys</VolLabel>
            <VolLabel>Sells</VolLabel>
            <VolLabel $align="right">Net Vol.</VolLabel>
            <VolCell $align="left">$221K</VolCell>
            <VolCell $color={C.green}>
              350<i>/</i>$110K
            </VolCell>
            <VolCell $color={C.pink}>
              303<i>/</i>$111K
            </VolCell>
            <VolCell $align="right" $color={C.pink}>
              -$935.7
            </VolCell>
          </VolumeGrid>
          <VolBars>
            <VolBar $color={C.green} style={{ width: 192 }} />
            <VolBar $color={C.pink} style={{ width: 187 }} />
          </VolBars>
        </Volumes>

        <SwitchWrap>
          <Switch>
            <SwitchBtn $on>Buy</SwitchBtn>
            <SwitchBtn>Sell</SwitchBtn>
          </Switch>
        </SwitchWrap>

        <OrderTabs>
          <OrderTab $active $mr={43}>Market</OrderTab>
          <OrderTab $mr={44}>Limit</OrderTab>
          <OrderTab $mr={0}>Adv.</OrderTab>
          <WalletPill>
            <Wallet size={17} strokeWidth={1.5} color="#8b8c94" />
            1
            <SolanaMark />
            0.014
          </WalletPill>
        </OrderTabs>

        <OrderForm>
          <AmountBox>
            <AmountInput>
              AMOUNT
              <AmountZero>0.0</AmountZero>
              <SolWrap>
                <SolanaMark />
              </SolWrap>
            </AmountInput>
            <QuickRow>
              <QuickCell>0.01</QuickCell>
              <QuickCell>0.1</QuickCell>
              <QuickCell>1</QuickCell>
              <QuickCell>10</QuickCell>
              <QuickCell>
                <Pencil size={18} strokeWidth={1.4} />
              </QuickCell>
            </QuickRow>
          </AmountBox>
          <InfoRow>
            <InfoItem>
              <SlipIcon />
              20%
            </InfoItem>
            <InfoSep />
            <InfoItem $warn>
              <Fuel size={16} strokeWidth={1.5} />
              0.001
              <Warn />
            </InfoItem>
            <InfoSep />
            <InfoItem $warn>
              <CoinIcon />
              0.001
              <Warn />
            </InfoItem>
            <InfoSep />
            <InfoItem>
              <Bot size={17} strokeWidth={1.4} color="#9a9ba3" />
              Off
            </InfoItem>
          </InfoRow>
          <CheckRow>
            <CheckBox />
            Advanced Trading Strategy
          </CheckRow>
          <BuyButton>Buy LAUNCH</BuyButton>
        </OrderForm>

        <Position>
          <PosCell $inset={22}>
            <PosLabel>Bought</PosLabel>
            <PosValue $color={C.green}>$0</PosValue>
          </PosCell>
          <PosCell>
            <PosLabel>Sold</PosLabel>
            <PosValue $color={C.pink}>$0</PosValue>
          </PosCell>
          <PosCell>
            <PosLabel>Holding</PosLabel>
            <PosValue>$0</PosValue>
          </PosCell>
          <PosCell>
            <PosLabel>
              PnL
              <CircleDollarSign size={16} color={C.green} strokeWidth={1.6} />
            </PosLabel>
            <PosValue $color={C.green}>+$0 (+0%)</PosValue>
          </PosCell>
        </Position>

        <Presets>
          <Preset $on>PRESET 1</Preset>
          <Preset>PRESET 2</Preset>
          <Preset>PRESET 3</Preset>
        </Presets>

        <TokenInfo>
          <InfoTitle>
            Token Info
            <ChevronDown size={14} strokeWidth={2} />
          </InfoTitle>
          <Cards>
            {tokenCards.map((card) => (
              <Card key={card.value}>
                <CardValue $color={card.color}>
                  {card.icon}
                  {card.value}
                </CardValue>
                {card.label && <CardLabel>{card.label}</CardLabel>}
              </Card>
            ))}
          </Cards>
        </TokenInfo>
      </Side>
    </Body>
    <Footer />
  </Page>
);

export default App;
